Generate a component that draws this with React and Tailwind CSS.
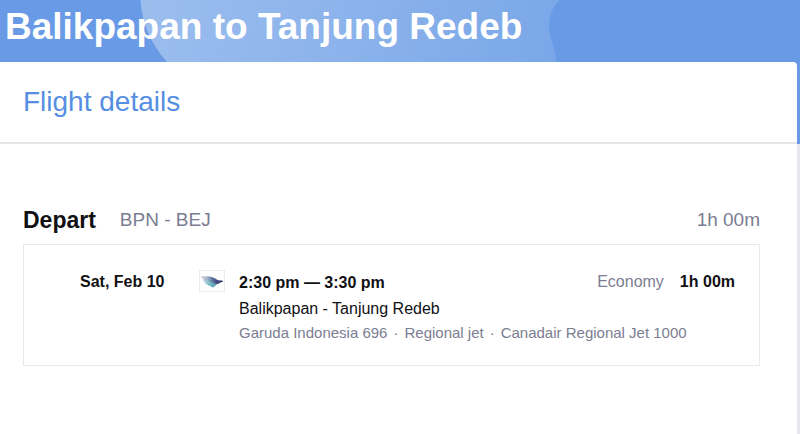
import React from "react";

const trip = {
  title: "Balikpapan to Tanjung Redeb",
  codes: "BPN - BEJ",
  duration: "1h 00m",
};

const segment = {
  date: "Sat, Feb 10",
  time: "2:30 pm — 3:30 pm",
  route: "Balikpapan - Tanjung Redeb",
  info: ["Garuda Indonesia 696", "Regional jet", "Canadair Regional Jet 1000"],
  cabin: "Economy",
  duration: "1h 00m",
};

const HeaderWave = () => (
  <svg
    className="absolute inset-0 h-full w-full"
    viewBox="0 0 800 62"
    preserveAspectRatio="none"
    aria-hidden="true"
  >
    <defs>
      <linearGradient id="wave" gradientUnits="userSpaceOnUse" x1="150" y1="0" x2="550" y2="100">
        <stop offset="0" stopColor="#9bbdee" />
        <stop offset="1" stopColor="#7aa7e8" />
      </linearGradient>
    </defs>
    <path
      d="M140.500 0C142 24 151 44 167 62H556C555 45 549 38 549 26C549 16 552 7 560 0Z"
      fill="url(#wave)"
    />
  </svg>
);

const AirlineLogo = () => (
  <svg
    className="h-[22px] w-[26px] shrink-0 border border-[#ececee]"
    viewBox="0 0 24 20"
    role="img"
    aria-label="Garuda Indonesia"
  >
    <defs>
      <linearGradient id="wing" x1="0" y1="0" x2="1" y2="0">
        <stop offset="0" stopColor="#d3d7e4" />
        <stop offset="0.3" stopColor="#9aa9c4" />
        <stop offset="0.5" stopColor="#5f78a0" />
        <stop offset="0.7" stopColor="#434a80" />
        <stop offset="1" stopColor="#35396f" />
      </linearGradient>
      <linearGradient id="feather" x1="0" y1="0" x2="1" y2="0">
        <stop offset="0" stopColor="#c5dfe6" />
        <stop offset="0.45" stopColor="#6bb5bf" />
        <stop offset="1" stopColor="#4a8fa8" />
      </linearGradient>
    </defs>
    <path
      d="M3 9L10 9L18.5 12L13.2 16.5L11.500 16L10.500 15L8.500 14.600L7.500 13.500L5.500 13L5 11.500L3.500 11Z"
      fill="url(#feather)"
    />
    <path
      d="M0.700 5.300L9 5.600C12 5.800 14.500 7 16.300 8.300C17.500 9.200 18.500 9.500 19.500 9.400C21 9.200 22 9.500 23.500 10.400C21 10.900 19.500 12.600 17 13C14 12.700 12 11 9 10.200L3.500 9L2.800 7.500L1.500 7Z"
      fill="url(#wing)"
    />
    <path
      d="M1.500 6.900L8 7.300L12 9M3 8.800L9 9.900L14 12.300M4 11L9 11.700L13 14"
      stroke="#ffffff"
      strokeOpacity="0.3"
      strokeWidth="0.5"
      fill="none"
    />
  </svg>
);

const Segment = ({ data }) => {
  return (
    <div className="flex h-[122px] items-start border border-[#e9e9ed] pt-[25px] pr-6 text-base leading-6">
      <div className="w-[175px] shrink-0 pl-14 font-bold">{data.date}</div>
      <div className="flex shrink-0">
        <AirlineLogo />
      </div>
      <div className="min-w-0 flex-1 pl-[14px]">
        <div className="flex items-start justify-between">
          <p className="pt-px font-bold">{data.time}</p>
          <p className="flex gap-4">
            <span className="text-[#7b7d91]">{data.cabin}</span>
            <span className="font-bold">{data.duration}</span>
          </p>
        </div>
        <p className="pt-0.5">{data.route}</p>
        <p className="flex gap-1.5 text-[15px] text-[#7b7d91]">
          {data.info.map((item, i) => (
            <React.Fragment key={item}>
              {i > 0 && <span>·</span>}
              <span>{item}</span>
            </React.Fragment>
          ))}
        </p>
      </div>
    </div>
  );
};

const App = () => {
  return (
    <div className="flex min-h-screen flex-col bg-[#e6e6ec] font-['Liberation_Sans',Arial,sans-serif] text-[#111114]">
      <div className="bg-[#689ae6]">
        <header className="relative px-[5px] pt-[7px] pb-[15px]">
          <HeaderWave />
          <h1 className="relative text-[37px] leading-10 font-bold text-white">{trip.title}</h1>
        </header>
        <div className="mr-[3px] rounded-tr-sm border-b-2 border-[#e6e6ea] bg-white px-[23px] py-5">
          <h2 className="text-[28px] leading-10 text-[#568fe2]">Flight details</h2>
        </div>
      </div>

      <main className="mr-[3px] flex-1 bg-white pr-[37px] pl-[23px] pt-[60px] pb-8">
        <div className="flex items-center pb-2 leading-8">
          <h3 className="text-[23px] font-bold">Depart</h3>
          <p className="pl-6 text-[19px] text-[#7b7d91]">{trip.codes}</p>
          <p className="ml-auto text-[19px] text-[#7b7d91]">{trip.duration}</p>
        </div>
        <Segment data={segment} />
      </main>
    </div>
  );
};

export default App;
